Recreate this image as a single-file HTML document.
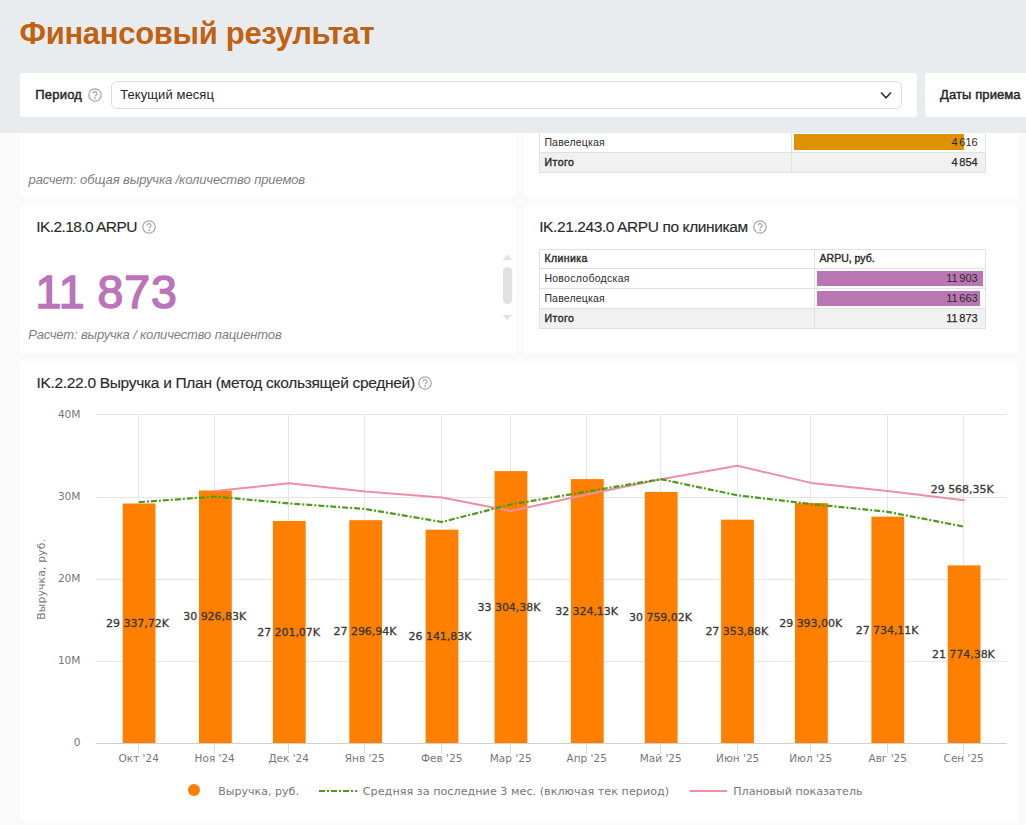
<!DOCTYPE html>
<html lang="ru">
<head>
<meta charset="utf-8">
<title>Финансовый результат</title>
<style>
*{box-sizing:border-box;margin:0;padding:0}
html,body{width:1026px;height:825px;overflow:hidden}
body{position:relative;background:#fafafa;font-family:"Liberation Sans",sans-serif;color:#262626;font-size:13px}
.abs{position:absolute}
.hdr{left:0;top:0;width:1026px;height:133px;background:#e9ecef}
h1{left:19.5px;top:15.6px;font-size:31px;line-height:36px;font-weight:bold;color:#c06212;white-space:nowrap;letter-spacing:-.3px}
.panel{background:#fff;border-radius:3px}
.card{background:#fff;border-radius:3px}
.sel{left:110.8px;top:80.8px;width:791px;height:28px;border:1px solid #dcdcdc;border-radius:6px;background:#fff}
.lbl{font-weight:normal;-webkit-text-stroke:.45px #262626;font-size:13px;line-height:16px;white-space:nowrap;letter-spacing:.2px}
.ttl{font-size:15.5px;line-height:18px;white-space:nowrap;color:#2b2b2b;letter-spacing:-.57px;-webkit-text-stroke:.15px #2b2b2b}
.note{font-style:italic;font-size:13px;line-height:16px;color:#7e7e7e;white-space:nowrap;letter-spacing:-.14px}
.big{left:35.6px;top:264px;font-size:46.5px;line-height:56px;color:#bb73b9;white-space:nowrap;-webkit-text-stroke:1.5px #bb73b9;word-spacing:-1.6px;letter-spacing:.8px}
.help{width:14px;height:14px}
.ln{position:absolute;background:#e1e1e1}
.c{position:absolute;font-size:10.5px;line-height:13px;white-space:nowrap;color:#2b2b2b}
.c.b{-webkit-text-stroke:.4px #2b2b2b}
.c.n{text-align:right;word-spacing:-1.3px;font-size:11px}
.c.n.t{-webkit-text-stroke:.25px #2b2b2b}
.bar{position:absolute}
</style>
</head>
<body>
<div class="abs hdr"></div>
<h1 class="abs">Финансовый результат</h1>

<div class="abs panel" style="left:20px;top:73px;width:897px;height:43.5px"></div>
<div class="abs lbl" style="left:35.3px;top:86.5px">Период</div>
<svg class="abs help" style="left:87.87px;top:87.87px" viewBox="0 0 14 14"><circle cx="7" cy="7" r="6.2" fill="none" stroke="#a8a8a8" stroke-width="1.3"/><path d="M5.15 5.6a1.9 1.9 0 1 1 2.85 1.6c-.65.4-.95.7-.95 1.3" fill="none" stroke="#a8a8a8" stroke-width="1.3"/><circle cx="7.05" cy="10.2" r=".85" fill="#a8a8a8"/></svg>
<div class="abs sel"></div>
<div class="abs" style="left:120.2px;top:86.6px;font-size:13px;line-height:16px;white-space:nowrap;letter-spacing:.08px">Текущий месяц</div>
<svg class="abs" style="left:879px;top:90px;width:14px;height:11px" viewBox="0 0 14 11"><path d="M2 2.6 7 7.8 12 2.6" fill="none" stroke="#2b2b2b" stroke-width="1.5"/></svg>
<div class="abs panel" style="left:925px;top:73px;width:120px;height:43.5px"></div>
<div class="abs lbl" style="left:940px;top:86.5px;letter-spacing:.1px">Даты приема</div>

<!-- partial cards under header -->
<div class="abs card" style="left:20px;top:133px;width:495.5px;height:63.6px;border-radius:0 0 3px 3px"></div>
<div class="abs note" style="left:28.5px;top:171.7px;letter-spacing:-.1px">расчет: общая выручка /количество приемов</div>
<div class="abs card" style="left:523.5px;top:133px;width:494.6px;height:64px;border-radius:0 0 3px 3px"></div>
<div class="abs" style="left:539px;top:133px;width:447px;height:40px">
<div class="abs" style="left:0;top:19px;width:447px;height:20px;background:#f1f1f1"></div>
<div class="ln" style="left:0;top:0;width:1px;height:40px"></div><div class="ln" style="left:252px;top:0;width:1px;height:40px"></div><div class="ln" style="left:446px;top:0;width:1px;height:40px"></div>
<div class="ln" style="left:0;top:19px;width:447px;height:1px"></div><div class="ln" style="left:0;top:39px;width:447px;height:1px"></div>
<div class="bar" style="left:255px;top:1.3px;width:170px;height:15.4px;background:#dc9204"></div>
<div class="c" style="left:5.4px;top:2.6px;letter-spacing:.18px">Павелецкая</div><div class="c n" style="right:8.3px;top:2.6px">4 616</div>
<div class="c b" style="left:5.4px;top:23px;letter-spacing:.5px">Итого</div><div class="c n t" style="right:8.3px;top:22.8px">4 854</div>
</div>

<!-- ARPU card -->
<div class="abs card" style="left:20px;top:205.2px;width:495.5px;height:147.5px"></div>
<div class="abs ttl" style="left:36.2px;top:217.7px">IK.2.18.0 ARPU</div>
<svg class="abs help" style="left:142.07px;top:219.85px" viewBox="0 0 14 14"><circle cx="7" cy="7" r="6.2" fill="none" stroke="#a8a8a8" stroke-width="1.3"/><path d="M5.15 5.6a1.9 1.9 0 1 1 2.85 1.6c-.65.4-.95.7-.95 1.3" fill="none" stroke="#a8a8a8" stroke-width="1.3"/><circle cx="7.05" cy="10.2" r=".85" fill="#a8a8a8"/></svg>
<div class="abs big">11 873</div>
<div class="abs note" style="left:28.2px;top:327px">Расчет: выручка / количество пациентов</div>
<svg class="abs" style="left:500px;top:250px;width:16px;height:75px" viewBox="0 0 16 75"><path d="M2.5 10h9.7l-4.85-5.4z" fill="#e2e2e2"/><rect x="2.9" y="16.9" width="9.3" height="37.1" rx="4.6" fill="#e1e1e1"/><path d="M2.5 65h9.7l-4.85 5.2z" fill="#e2e2e2"/></svg>

<!-- ARPU by clinic card -->
<div class="abs card" style="left:523.5px;top:204.6px;width:494.5px;height:148.2px"></div>
<div class="abs ttl" style="left:539.2px;top:217.9px;letter-spacing:-.4px">IK.21.243.0 ARPU по клиникам</div>
<svg class="abs help" style="left:753.05px;top:219.85px" viewBox="0 0 14 14"><circle cx="7" cy="7" r="6.2" fill="none" stroke="#a8a8a8" stroke-width="1.3"/><path d="M5.15 5.6a1.9 1.9 0 1 1 2.85 1.6c-.65.4-.95.7-.95 1.3" fill="none" stroke="#a8a8a8" stroke-width="1.3"/><circle cx="7.05" cy="10.2" r=".85" fill="#a8a8a8"/></svg>
<div class="abs" style="left:539px;top:249px;width:447px;height:80px">
<div class="abs" style="left:0;top:59px;width:447px;height:20px;background:#f1f1f1"></div>
<div class="ln" style="left:0;top:0;width:1px;height:80px"></div><div class="ln" style="left:275px;top:0;width:1px;height:80px"></div><div class="ln" style="left:446px;top:0;width:1px;height:80px"></div>
<div class="ln" style="left:0;top:0;width:447px;height:1px"></div><div class="ln" style="left:0;top:19px;width:447px;height:1px"></div><div class="ln" style="left:0;top:39px;width:447px;height:1px"></div><div class="ln" style="left:0;top:59px;width:447px;height:1px"></div><div class="ln" style="left:0;top:79px;width:447px;height:1px"></div>
<div class="bar" style="left:278px;top:22.3px;width:166px;height:14.5px;background:#ba76b3"></div>
<div class="bar" style="left:278px;top:42px;width:163.3px;height:14.6px;background:#ba76b3"></div>
<div class="c b" style="left:5.4px;top:3px;letter-spacing:.4px">Клиника</div><div class="c b" style="left:280.6px;top:3px">ARPU, руб.</div>
<div class="c" style="left:5.4px;top:22.8px;letter-spacing:.28px">Новослободская</div><div class="c n" style="right:8.3px;top:22.8px">11 903</div>
<div class="c" style="left:5.4px;top:42.6px;letter-spacing:.18px">Павелецкая</div><div class="c n" style="right:8.3px;top:42.6px">11 663</div>
<div class="c b" style="left:5.4px;top:63px;letter-spacing:.5px">Итого</div><div class="c n t" style="right:8.3px;top:62.8px">11 873</div>
</div>

<!-- Chart card -->
<div class="abs card" style="left:20px;top:361.3px;width:997.8px;height:459.4px"></div>
<div class="abs ttl" style="left:36.4px;top:373.8px;letter-spacing:-.3px">IK.2.22.0 Выручка и План (метод скользящей средней)</div>
<svg class="abs help" style="left:418.05px;top:375.85px" viewBox="0 0 14 14"><circle cx="7" cy="7" r="6.2" fill="none" stroke="#a8a8a8" stroke-width="1.3"/><path d="M5.15 5.6a1.9 1.9 0 1 1 2.85 1.6c-.65.4-.95.7-.95 1.3" fill="none" stroke="#a8a8a8" stroke-width="1.3"/><circle cx="7.05" cy="10.2" r=".85" fill="#a8a8a8"/></svg>
<svg class="abs" style="left:0;top:400px" width="1026" height="425" viewBox="0 400 1026 425" font-family="'DejaVu Sans',sans-serif">
<path d="M96 414.5H1007" stroke="#e6e6e6" stroke-width="1" fill="none"/>
<path d="M96 497.5H1007" stroke="#e6e6e6" stroke-width="1" fill="none"/>
<path d="M96 579.5H1007" stroke="#e6e6e6" stroke-width="1" fill="none"/>
<path d="M96 661.5H1007" stroke="#e6e6e6" stroke-width="1" fill="none"/>
<path d="M138.5 414V743" stroke="#e6e6e6" stroke-width="1" fill="none"/>
<path d="M214.5 414V743" stroke="#e6e6e6" stroke-width="1" fill="none"/>
<path d="M288.5 414V743" stroke="#e6e6e6" stroke-width="1" fill="none"/>
<path d="M364.5 414V743" stroke="#e6e6e6" stroke-width="1" fill="none"/>
<path d="M441.5 414V743" stroke="#e6e6e6" stroke-width="1" fill="none"/>
<path d="M510.5 414V743" stroke="#e6e6e6" stroke-width="1" fill="none"/>
<path d="M586.5 414V743" stroke="#e6e6e6" stroke-width="1" fill="none"/>
<path d="M660.5 414V743" stroke="#e6e6e6" stroke-width="1" fill="none"/>
<path d="M737.5 414V743" stroke="#e6e6e6" stroke-width="1" fill="none"/>
<path d="M810.5 414V743" stroke="#e6e6e6" stroke-width="1" fill="none"/>
<path d="M887.5 414V743" stroke="#e6e6e6" stroke-width="1" fill="none"/>
<path d="M963.5 414V743" stroke="#e6e6e6" stroke-width="1" fill="none"/>
<path d="M96 743.5H1007" stroke="#d0d0d0" stroke-width="1" fill="none"/>
<path d="M138.5 743V753.5" stroke="#dcdcdc" stroke-width="1" fill="none"/>
<path d="M214.5 743V753.5" stroke="#dcdcdc" stroke-width="1" fill="none"/>
<path d="M288.5 743V753.5" stroke="#dcdcdc" stroke-width="1" fill="none"/>
<path d="M364.5 743V753.5" stroke="#dcdcdc" stroke-width="1" fill="none"/>
<path d="M441.5 743V753.5" stroke="#dcdcdc" stroke-width="1" fill="none"/>
<path d="M510.5 743V753.5" stroke="#dcdcdc" stroke-width="1" fill="none"/>
<path d="M586.5 743V753.5" stroke="#dcdcdc" stroke-width="1" fill="none"/>
<path d="M660.5 743V753.5" stroke="#dcdcdc" stroke-width="1" fill="none"/>
<path d="M737.5 743V753.5" stroke="#dcdcdc" stroke-width="1" fill="none"/>
<path d="M810.5 743V753.5" stroke="#dcdcdc" stroke-width="1" fill="none"/>
<path d="M887.5 743V753.5" stroke="#dcdcdc" stroke-width="1" fill="none"/>
<path d="M963.5 743V753.5" stroke="#dcdcdc" stroke-width="1" fill="none"/>
<rect x="122.7" y="503.5" width="32.8" height="239.5" fill="#ff7f00"/>
<rect x="199.0" y="490.5" width="32.8" height="252.5" fill="#ff7f00"/>
<rect x="272.9" y="521.0" width="32.8" height="222.0" fill="#ff7f00"/>
<rect x="349.3" y="520.2" width="32.8" height="222.8" fill="#ff7f00"/>
<rect x="425.6" y="529.7" width="32.8" height="213.3" fill="#ff7f00"/>
<rect x="494.6" y="471.1" width="32.8" height="271.9" fill="#ff7f00"/>
<rect x="570.9" y="479.1" width="32.8" height="263.9" fill="#ff7f00"/>
<rect x="644.8" y="491.9" width="32.8" height="251.1" fill="#ff7f00"/>
<rect x="721.1" y="519.7" width="32.8" height="223.3" fill="#ff7f00"/>
<rect x="795.0" y="503.1" width="32.8" height="239.9" fill="#ff7f00"/>
<rect x="871.4" y="516.6" width="32.8" height="226.4" fill="#ff7f00"/>
<rect x="947.7" y="565.4" width="32.8" height="177.6" fill="#ff7f00"/>
<polyline points="215.2,491.0 289.1,483.2 365.5,491.5 441.8,497.6 510.8,511.0 587.1,494.6 661.0,479.2 737.3,465.7 811.2,482.9 887.6,491.0 963.9,500.2" fill="none" stroke="#ee8fa2" stroke-width="2" stroke-linejoin="round" stroke-linecap="round"/>
<polyline points="138.9,502.2 215.2,496.6 289.1,503.4 365.5,509.0 441.8,522.0 510.8,504.5 587.1,491.5 661.0,479.2 737.3,495.3 811.2,504.0 887.6,511.8 963.9,526.6" fill="none" stroke="#4b9b1c" stroke-width="2.2" stroke-dasharray="6,2,2,2" stroke-linejoin="round"/>
<text x="80.5" y="417.9" text-anchor="end" font-size="10.6" fill="#777">40M</text>
<text x="80.5" y="499.9" text-anchor="end" font-size="10.6" fill="#777">30M</text>
<text x="80.5" y="581.9" text-anchor="end" font-size="10.6" fill="#777">20M</text>
<text x="80.5" y="663.9" text-anchor="end" font-size="10.6" fill="#777">10M</text>
<text x="80.5" y="745.7" text-anchor="end" font-size="10.6" fill="#777">0</text>
<text transform="translate(45.2,579.4) rotate(-90)" text-anchor="middle" font-size="10.8" fill="#777" textLength="80.6" lengthAdjust="spacing">Выручка, руб.</text>
<text x="138.7" y="761.8" font-size="10.5" fill="#777" text-anchor="middle">Окт '24</text>
<text x="214.7" y="761.8" font-size="10.5" fill="#777" text-anchor="middle">Ноя '24</text>
<text x="288.7" y="761.8" font-size="10.5" fill="#777" text-anchor="middle">Дек '24</text>
<text x="364.7" y="761.8" font-size="10.5" fill="#777" text-anchor="middle">Янв '25</text>
<text x="441.7" y="761.8" font-size="10.5" fill="#777" text-anchor="middle">Фев '25</text>
<text x="510.7" y="761.8" font-size="10.5" fill="#777" text-anchor="middle">Мар '25</text>
<text x="586.7" y="761.8" font-size="10.5" fill="#777" text-anchor="middle">Апр '25</text>
<text x="660.7" y="761.8" font-size="10.5" fill="#777" text-anchor="middle">Май '25</text>
<text x="737.7" y="761.8" font-size="10.5" fill="#777" text-anchor="middle">Июн '25</text>
<text x="810.7" y="761.8" font-size="10.5" fill="#777" text-anchor="middle">Июл '25</text>
<text x="887.7" y="761.8" font-size="10.5" fill="#777" text-anchor="middle">Авг '25</text>
<text x="963.7" y="761.8" font-size="10.5" fill="#777" text-anchor="middle">Сен '25</text>
<text x="106.1" y="626.8" font-size="11" fill="#383838" stroke="#383838" stroke-width=".3" textLength="62.8" lengthAdjust="spacing">29 337,72K</text>
<text x="183.3" y="620.3" font-size="11" fill="#383838" stroke="#383838" stroke-width=".3" textLength="62.8" lengthAdjust="spacing">30 926,83K</text>
<text x="257.2" y="635.5" font-size="11" fill="#383838" stroke="#383838" stroke-width=".3" textLength="62.8" lengthAdjust="spacing">27 201,07K</text>
<text x="333.6" y="635.1" font-size="11" fill="#383838" stroke="#383838" stroke-width=".3" textLength="62.8" lengthAdjust="spacing">27 296,94K</text>
<text x="408.6" y="639.8" font-size="11" fill="#383838" stroke="#383838" stroke-width=".3" textLength="62.8" lengthAdjust="spacing">26 141,83K</text>
<text x="477.6" y="610.5" font-size="11" fill="#383838" stroke="#383838" stroke-width=".3" textLength="62.8" lengthAdjust="spacing">33 304,38K</text>
<text x="555.2" y="614.5" font-size="11" fill="#383838" stroke="#383838" stroke-width=".3" textLength="62.8" lengthAdjust="spacing">32 324,13K</text>
<text x="629.1" y="620.9" font-size="11" fill="#383838" stroke="#383838" stroke-width=".3" textLength="62.8" lengthAdjust="spacing">30 759,02K</text>
<text x="705.4" y="634.9" font-size="11" fill="#383838" stroke="#383838" stroke-width=".3" textLength="62.8" lengthAdjust="spacing">27 353,88K</text>
<text x="779.3" y="626.5" font-size="11" fill="#383838" stroke="#383838" stroke-width=".3" textLength="62.8" lengthAdjust="spacing">29 393,00K</text>
<text x="855.7" y="634.1" font-size="11" fill="#383838" stroke="#383838" stroke-width=".3" textLength="62.8" lengthAdjust="spacing">27 734,11K</text>
<text x="932.0" y="657.7" font-size="11" fill="#383838" stroke="#383838" stroke-width=".3" textLength="62.8" lengthAdjust="spacing">21 774,38K</text>
<text x="930.8" y="493.4" font-size="11" fill="#383838" stroke="#383838" stroke-width=".3" textLength="62.8" lengthAdjust="spacing">29 568,35K</text>
<circle cx="194" cy="790" r="6" fill="#ff7f00"/>
<text x="218.2" y="795" font-size="11" fill="#777" textLength="80.7" lengthAdjust="spacing">Выручка, руб.</text>
<path d="M319 791H357" stroke="#4b9b1c" stroke-width="2" stroke-dasharray="6,2,2,2" fill="none"/>
<text x="362.8" y="795" font-size="11.2" fill="#777" textLength="306.4" lengthAdjust="spacing">Средняя за последние 3 мес. (включая тек период)</text>
<path d="M689.5 791H727" stroke="#ee8fa2" stroke-width="2" fill="none"/>
<text x="733.3" y="795" font-size="11.1" fill="#777" textLength="129.2" lengthAdjust="spacing">Плановый показатель</text>
</svg>
</body>
</html>
